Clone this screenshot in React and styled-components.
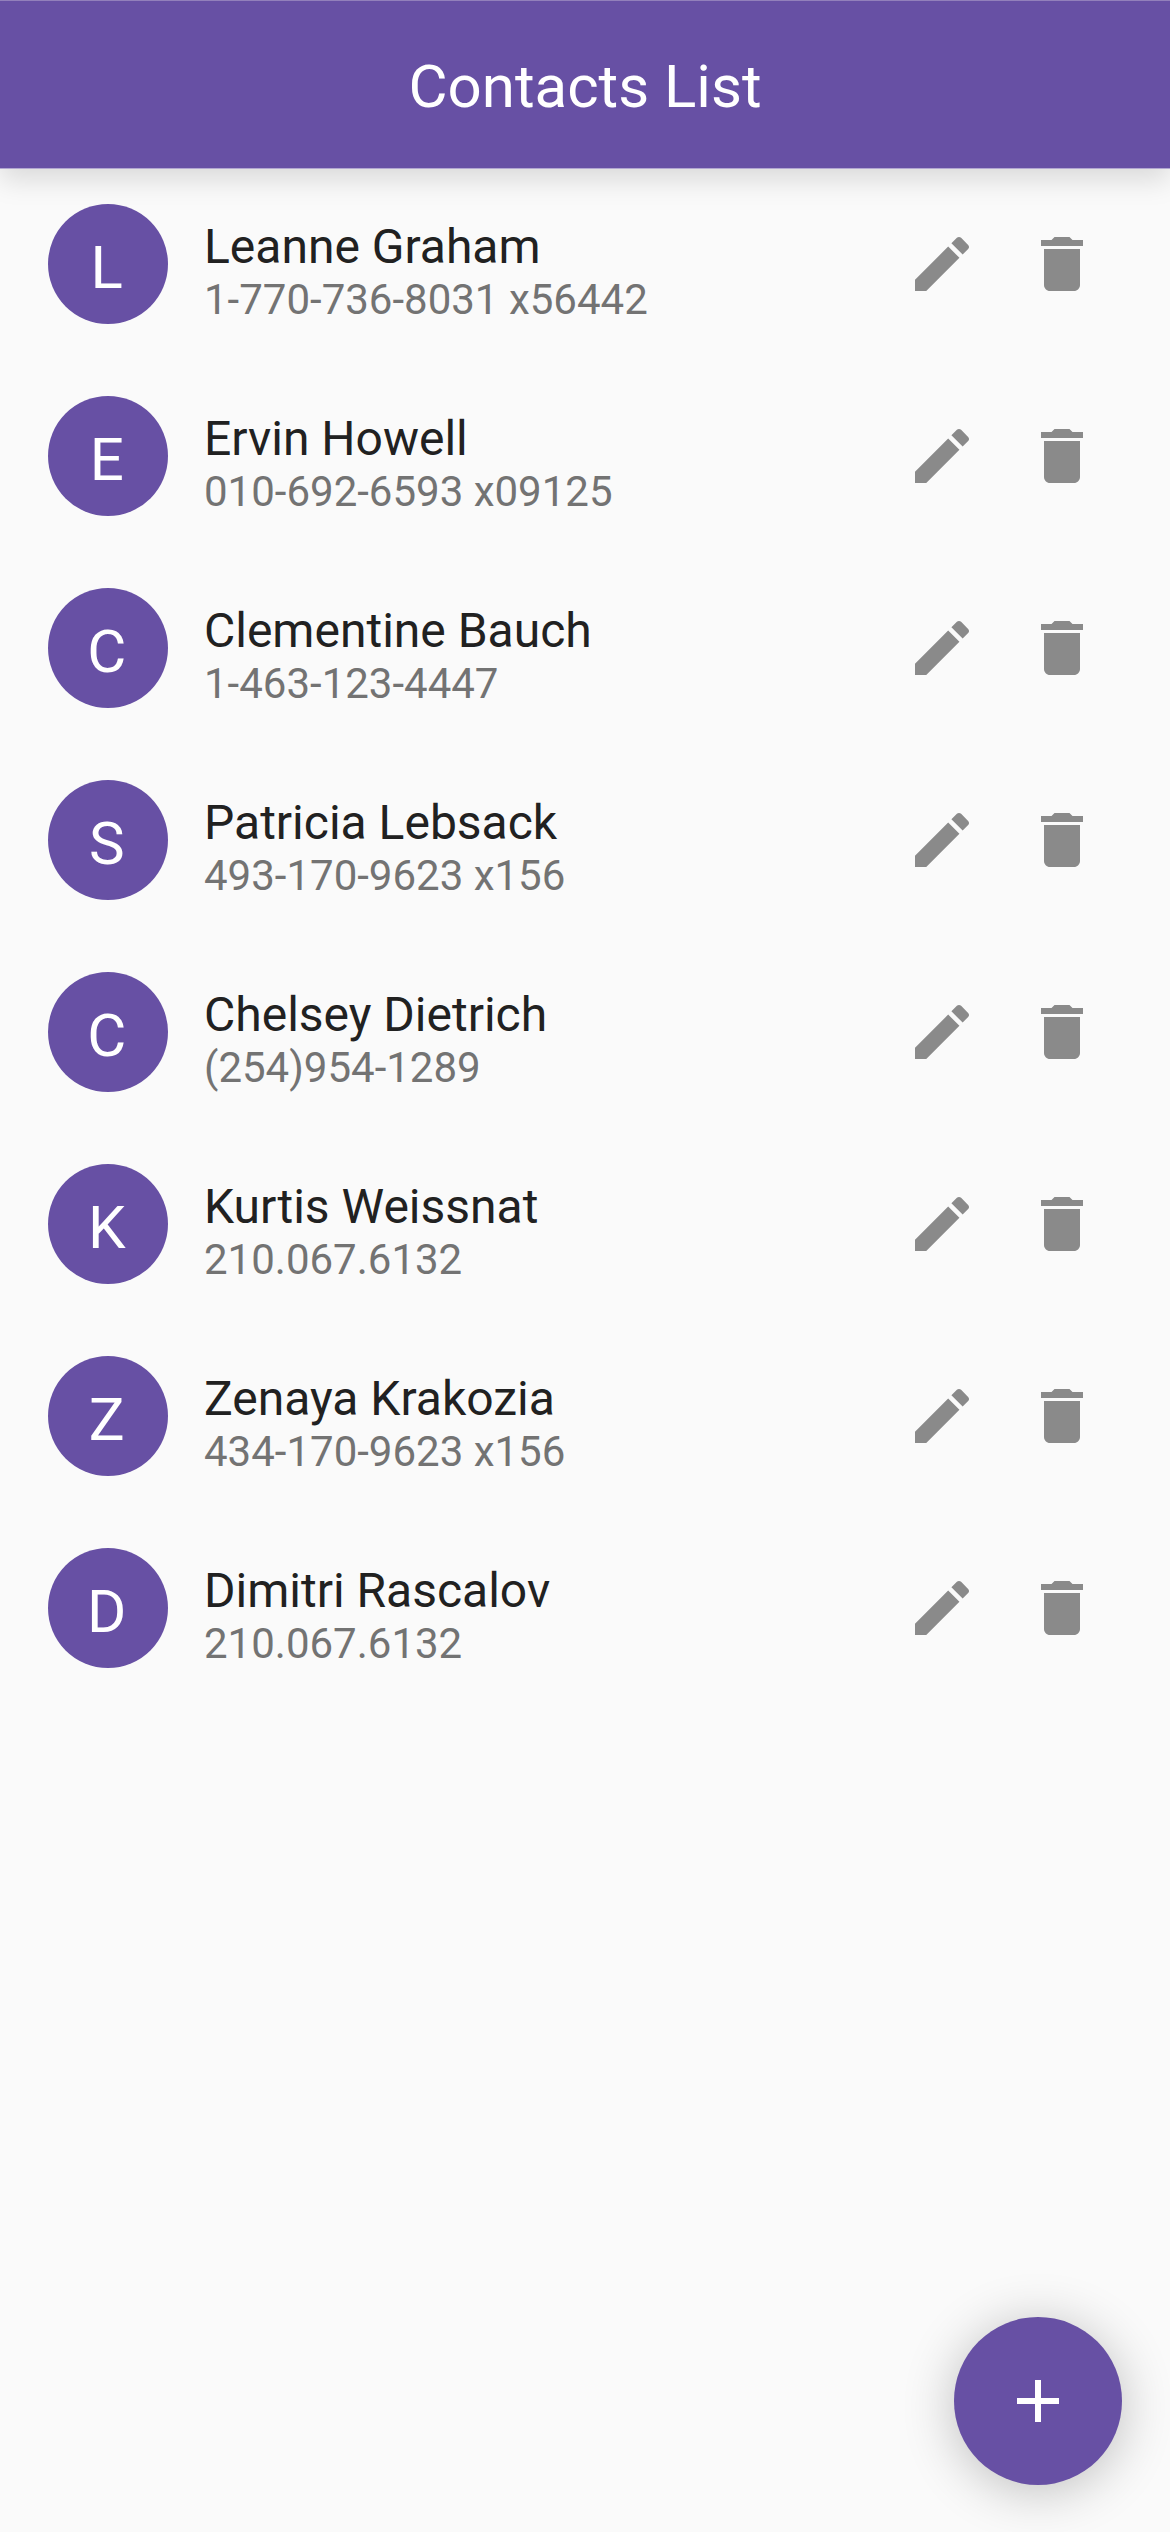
import React from 'react';
import styled, { createGlobalStyle } from 'styled-components';

const Global = createGlobalStyle`
  * { box-sizing: border-box; }
  body { margin: 0; background: #fafafa; font-family: Roboto, sans-serif; }
`;

const Screen = styled.div`
  width: 1170px;
  height: 2532px;
  display: flex;
  flex-direction: column;
  background: #fafafa;
  position: relative;
  overflow: hidden;
`;

const AppBar = styled.header`
  height: 168px;
  flex: none;
  display: flex;
  align-items: center;
  justify-content: center;
  padding-top: 6px;
  background: #6750a4;
  box-shadow: inset 0 1px 0 #9280bb, 0 1px 0 #b2a7d1, 0 12px 26px rgba(0, 0, 0, 0.13);
`;

const Title = styled.h1`
  margin: 0;
  font-size: 60px;
  font-weight: 400;
  line-height: 72px;
  color: #fff;
`;

const List = styled.ul`
  margin: 0;
  padding: 0;
  list-style: none;
`;

const Row = styled.li`
  height: 192px;
  display: flex;
  align-items: center;
  padding: 0 48px;
`;

const Avatar = styled.div`
  width: 120px;
  height: 120px;
  border-radius: 50%;
  display: flex;
  align-items: center;
  justify-content: center;
  padding: 6px 2.5px 0 0;
  background: #6750a4;
  color: #fff;
  font-size: 60px;
`;

const Info = styled.div`
  flex: 1;
  margin-left: 36px;
  padding-top: 16px;
`;

const Name = styled.div`
  font-size: 48px;
  line-height: 56px;
  color: #212121;
`;

const Phone = styled.div`
  font-size: 42px;
  line-height: 50px;
  color: #737373;
`;

const IconButton = styled.button`
  width: 120px;
  height: 120px;
  border: 0;
  padding: 0;
  background: none;
  color: #8a8a8a;
  display: flex;
  align-items: center;
  justify-content: center;
`;

const Icon = styled.svg`
  width: 72px;
  height: 72px;
  fill: currentColor;
`;

const Fab = styled.button`
  position: absolute;
  right: 48px;
  bottom: 47px;
  width: 168px;
  height: 168px;
  border: 0;
  padding: 0;
  border-radius: 50%;
  background: #6750a4;
  color: #fff;
  display: flex;
  align-items: center;
  justify-content: center;
  box-shadow: 0 6px 52px rgba(0, 0, 0, 0.24);
`;

const contacts = [
  ['Leanne Graham', '1-770-736-8031 x56442', 'L'],
  ['Ervin Howell', '010-692-6593 x09125', 'E'],
  ['Clementine Bauch', '1-463-123-4447', 'C'],
  ['Patricia Lebsack', '493-170-9623 x156', 'S'],
  ['Chelsey Dietrich', '(254)954-1289', 'C'],
  ['Kurtis Weissnat', '210.067.6132', 'K'],
  ['Zenaya Krakozia', '434-170-9623 x156', 'Z'],
  ['Dimitri Rascalov', '210.067.6132', 'D'],
];

const EDIT = 'M3 17.25V21h3.75L17.81 9.94l-3.75-3.75L3 17.25zM20.71 7.04c.39-.39.39-1.02 0-1.41l-2.34-2.34c-.39-.39-1.02-.39-1.41 0l-1.83 1.83 3.75 3.75 1.83-1.83z';
const TRASH = 'M6 19c0 1.1.9 2 2 2h8c1.1 0 2-.9 2-2V7H6v12zM19 4h-3.5l-1-1h-5l-1 1H5v2h14V4z';
const PLUS = 'M19 13h-6v6h-2v-6H5v-2h6V5h2v6h6v2z';

export default function App() {
  return (
    <Screen>
      <Global />
      <AppBar><Title>Contacts List</Title></AppBar>
      <List>
        {contacts.map(([name, phone, initial]) => (
          <Row key={name}>
            <Avatar>{initial}</Avatar>
            <Info>
              <Name>{name}</Name>
              <Phone>{phone}</Phone>
            </Info>
            <IconButton aria-label="Edit"><Icon viewBox="0 0 24 24"><path d={EDIT} /></Icon></IconButton>
            <IconButton aria-label="Delete"><Icon viewBox="0 0 24 24"><path d={TRASH} /></Icon></IconButton>
          </Row>
        ))}
      </List>
      <Fab aria-label="Add"><Icon viewBox="0 0 24 24"><path d={PLUS} /></Icon></Fab>
    </Screen>
  );
}
